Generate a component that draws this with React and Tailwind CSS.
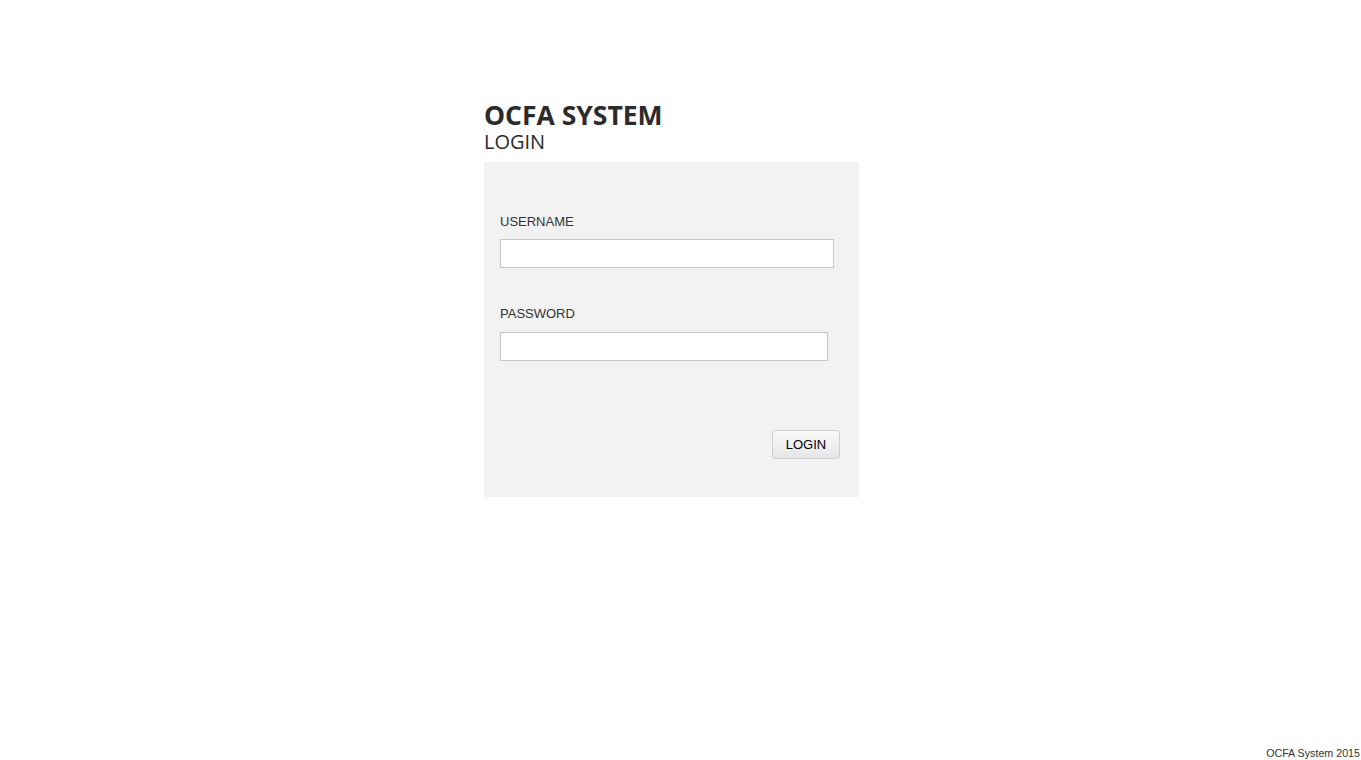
export default function App() {
  return (
    <div className="flex min-h-screen flex-col bg-white font-['Liberation_Sans',Arial,sans-serif] text-[#333]">
      <div className="flex flex-1 justify-center pr-[18px] pt-[100px]">
        <div className="w-[375px]">
          <h1 className="font-['Open_Sans',sans-serif] text-[26.5px] font-bold leading-[30px] text-[#2b2b2b]">
            OCFA SYSTEM
          </h1>
          <h2 className="font-['Open_Sans',sans-serif] text-[20px] leading-[24px] text-[#2b2b2b]">
            LOGIN
          </h2>
          <form className="mt-[8px] bg-[#f2f2f2] pl-4 pr-[19px] pb-[38px] pt-[50px]">
            <label className="block text-[13px] leading-[20px]">USERNAME</label>
            <input
              type="text"
              className="mt-[7px] block h-[29px] w-[334px] border border-[#c8c8c8] bg-white px-1 outline-none"
            />
            <label className="mt-[36px] block text-[13px] leading-[20px]">PASSWORD</label>
            <input
              type="password"
              className="mt-[8px] block h-[29px] w-[328px] border border-[#c8c8c8] bg-white px-1 outline-none"
            />
            <div className="mt-[69px] flex justify-end">
              <button
                type="button"
                className="h-[29px] w-[68px] rounded-[3px] border border-[#cfcfcf] bg-gradient-to-b from-[#fafafa] to-[#e6e6e6] text-[13px] text-black"
              >
                LOGIN
              </button>
            </div>
          </form>
        </div>
      </div>
      <footer className="pr-[1px] text-right text-[10.7px] leading-[14px] text-[#333]">
        OCFA System 2015
      </footer>
    </div>
  );
}
